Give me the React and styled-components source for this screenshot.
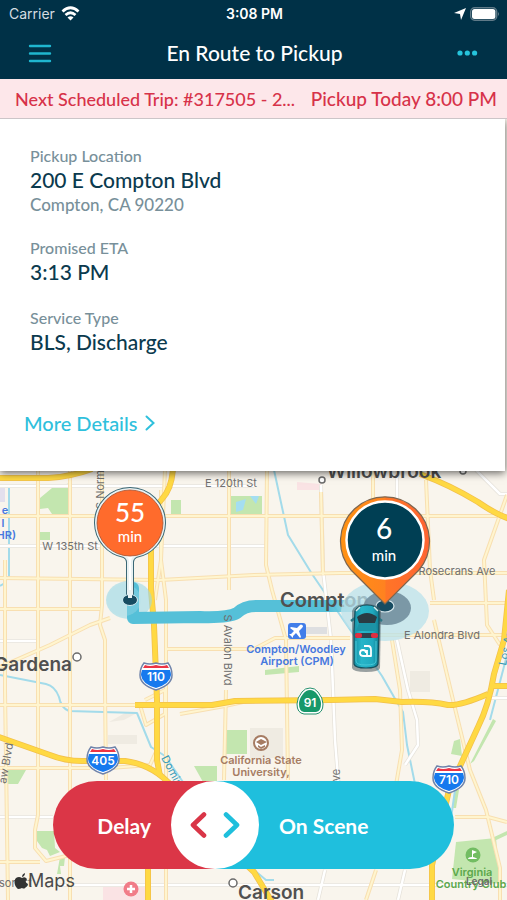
import React from 'react';
import styled, { createGlobalStyle } from 'styled-components';

const GlobalStyle = createGlobalStyle`
	*, *::before, *::after {
		box-sizing: border-box;
	}
	body {
		margin: 0;
		font-family: Lato, "Open Sans", sans-serif;
		background: #f9f5ed;
	}
	h1, p, dl, dt, dd {
		margin: 0;
	}
	button {
		border: none;
		padding: 0;
		background: none;
		font-family: inherit;
		cursor: pointer;
	}
`

const INTERSTATES = [
	{ x: 156, y: 676, label: '110' },
	{ x: 103, y: 760, label: '405' },
	{ x: 449, y: 779, label: '710' },
];

const MINOR_ROADS = [
	'M5 560V690L8 900', 'M38 470V815L35 830V848L46 861L70 855', 'M70 470V900',
	'M102 470V605L100 625L105 640V690L106 780',
	'M165 470L161 560L166 600V900', 'M161 490V560L155 600', 'M229 470V590M226 690L224 780',
	'M267 470L266 565L272 590L286 640L288 780', 'M321 492L323 575',
	'M373 470V500', 'M426 480L430 570L434 600M392 640L400 690L402 750L396 785',
	'M507 495L484 560L487 625L500 645', 'M434 620L453 700L470 770L486 810L500 868V900',
	'M0 516H507', 'M0 578L160 580L254 575L340 573H507', 'M0 609L100 609',
	'M0 705H135', 'M0 667L50 645L90 625L110 618', 'M165 649H254L275 638H350M378 635H507',
	'M0 862H40', 'M140 705L146 725L165 714V690L145 700', 'M455 817H488L507 822', 'M430 603H507',
	'M0 768H90M110 768L150 765L156 752', 'M376 870L366 900', 'M180 714L225 706L243 702',
];
const WHITE_ROADS = [
	'M0 546H254', 'M0 641H38', 'M0 817H53', 'M60 885H507', 'M321 485L323 570L331 640L335 740L339 790',
	'M0 486H254', 'M485 698H507', 'M397 640L408 690L417 720L418 745L405 765', 'M397 470V500',
	'M325 870L318 900', 'M405 870L398 900', 'M476 470L500 494H507', 'M254 546H266',
];
const HIGHWAYS = [
	'M-4 478H48Q70 477 92 469',
	'M173 468Q172 488 162 499Q151 510 151 530V590L154 625L157 700V760L160 776',
	'M135 705H212L235 701L330 700L375 699L402 702Q430 701 448 705Q460 706 488 694',
	'M-4 736L50 755Q65 761 82 761H125Q150 764 168 782L220 840L254 872L272 902',
	'M420 474Q450 485 478 502Q495 514 510 519',
	'M509 590L504 640L494 674Q489 705 478 727L449 790L432 865V902',
	'M148 866V902', 'M491 686H510',
];
const WATER = [
	'M9 484V577M5 583L0 586', 'M274 470L288 535L312 574L340 615L382 676L394 697L403 712L407 745L415 784',
	'M0 675L46 684Q55 686 59 697Q61 708 69 711L137 713L144 730L151 747L165 756L185 785',
	'M455 790L448 840', 'M254 870L266 880H274', 'M507 655L490 720',
];

const STOP_PIN = 'M96 523A34 34 0 0 1 164 523A34 34 0 0 1 136 556Q132 558 132 562V598H128V562Q128 558 124 556A34 34 0 0 1 96 523Z';

function Label({ x, y, size = 11, color = '#707070', anchor = 'middle', bold, rotate, children }) {
	return (
		<MapText
			x={x}
			y={y}
			$size={size}
			$bold={bold}
			fill={color}
			textAnchor={anchor}
			transform={rotate ? `rotate(${rotate} ${x} ${y})` : undefined}
		>
			{children}
		</MapText>
	);
}

function Interstate({ x, y, label }) {
	const shield = 'M-12-13Q-6-11 0-13Q6-11 12-13Q16-8 16-1Q16 9 0 14Q-16 9-16-1Q-16-8-12-13Z';
	return (
		<g transform={`translate(${x} ${y})`}>
			<path d={shield} fill="#fff" stroke="#6f83aa" strokeWidth="1.5" />
			<path d="M-14-6H14Q15-3 15-1Q14 8 0 12Q-14 8-15-1Q-15-3-14-6Z" fill="#1679ee" />
			<path d="M-11-11Q-6-9 0-11Q6-9 11-11L13-8H-13Z" fill="#ec3445" />
			<Label x={0} y={5} size={12} color="#fff" bold>{label}</Label>
		</g>
	);
}

function RouteMap() {
	return (
		<MapSvg viewBox="0 471 507 429" preserveAspectRatio="xMidYMin slice" role="img" aria-label="Route map">
			<defs>
				<linearGradient id="pinFill">
					<stop offset="0" stopColor="#ff9212" />
					<stop offset="0.5" stopColor="#ff8220" />
					<stop offset="0.51" stopColor="#ff7527" />
					<stop offset="1" stopColor="#ff6432" />
				</linearGradient>
				<linearGradient id="carFill">
					<stop offset="0" stopColor="#1691a6" />
					<stop offset="0.3" stopColor="#27b5c9" />
					<stop offset="0.75" stopColor="#20a9bf" />
					<stop offset="1" stopColor="#117b8f" />
				</linearGradient>
				<linearGradient id="routeFill" gradientUnits="userSpaceOnUse" x1="330" y1="0" x2="368" y2="0">
					<stop offset="0" stopColor="#55c0d8" />
					<stop offset="1" stopColor="#55c0d8" stopOpacity="0.3" />
				</linearGradient>
			</defs>
			<rect y="471" width="507" height="429" fill="#f9f5ed" />

			<g fill="#c3e6af">
				<path d="M40 498L52 488L70 483V514H52L48 508L40 509Z" />
				<path d="M40 532H50V540H40ZM171 500H181V514H171ZM230 496H262V514H230Z" />
				<path d="M226 730H247V754H226ZM194 766H217V782H203ZM4 770H26L18 784H4Z" />
				<path d="M37 831H54L55 848L60 852L50 856L47 850L42 848L37 841ZM60 857H65L64 866H60L61 874H57Z" />
				<path d="M456 842L496 838L500 884L452 879Z" />
				<path d="M493 719L496 721L474 761L470 764ZM454 741L460 739L462 756L451 754ZM265 670L299 666V672L265 675Z" />
				<path d="M492 838L507 831V835L492 842ZM455 790H459L456 808H453Z" />
			</g>
			<path d="M236 502L246 499L243 510L236 512ZM250 496H259L256 504Z" fill="#a4def1" />
			<g fill="#efebe2">
				<path d="M108 735H137V744H108ZM109 722L125 713H137L124 720ZM410 671H430V692H410ZM250 728H283V758H250Z" />
				<path d="M304 627H327V634H304Z" fill="#dedfe1" />
				<path d="M0 484H5V502H0Z" fill="#e3e0ed" />
				<path d="M297 482L321 484V490H297ZM103 885H145V900H103Z" fill="#fae3e4" />
			</g>

			<g fill="none" strokeLinejoin="round">
				{WATER.map((d) => <path key={d} d={d} stroke="#a3dbea" strokeWidth="2" />)}
				{WHITE_ROADS.map((d) => <path key={d} d={d} stroke="#e6e2da" strokeWidth="4" />)}
				{WHITE_ROADS.map((d) => <path key={d} d={d} stroke="#fff" strokeWidth="2.5" />)}
				{MINOR_ROADS.map((d) => <path key={d} d={d} stroke="#f8dfb1" strokeWidth="4" />)}
				{MINOR_ROADS.map((d) => <path key={d} d={d} stroke="#fff5cf" strokeWidth="2" />)}
				{HIGHWAYS.map((d) => <path key={d} d={d} stroke="#f2c04c" strokeWidth="6" />)}
				{HIGHWAYS.map((d) => <path key={d} d={d} stroke="#ffd943" strokeWidth="4.5" />)}
			</g>

			<g fill="#fff" stroke="#6b6b6b" strokeWidth="1.5">
				<circle cx="322" cy="480" r="3" />
				<circle cx="463" cy="471" r="3" />
				<circle cx="77" cy="657" r="4" />
				<circle cx="233" cy="883" r="4" />
			</g>

			<ellipse cx="129" cy="600" rx="23" ry="19" fill="#9bd9e6" fillOpacity="0.6" />
			<path
				d="M133 588V618L200 617Q228 618 237 613Q244 606 256 606H368"
				fill="none"
				stroke="url(#routeFill)"
				strokeWidth="12"
				strokeLinecap="round"
				strokeLinejoin="round"
			/>
			<ellipse cx="124" cy="600" rx="17" ry="16" fill="#b5e1ea" fillOpacity="0.3" />

			<Label x={384} y={478} size={19} color="#505050" bold>Willowbrook</Label>
			<Label x={280} y={607} size={20} color="#505050" anchor="start" bold>Compton</Label>
			<ellipse cx="385" cy="611" rx="44" ry="30" fill="#b9e2eb" fillOpacity="0.75" />
			<ellipse cx="387" cy="608" rx="24" ry="17" fill="#728f9e" fillOpacity="0.9" />
			<Label x={72} y={671} size={19} color="#505050" anchor="end" bold>Gardena</Label>
			<Label x={238} y={899} size={19} color="#505050" anchor="start" bold>Carson</Label>
			<Label x={231} y={487}>E 120th St</Label>
			<Label x={70} y={550}>W 135th St</Label>
			<Label x={457} y={575}>Rosecrans Ave</Label>
			<Label x={442} y={639}>E Alondra Blvd</Label>
			<Label x={104} y={509} anchor="start" rotate={-90}>S Normandie</Label>
			<Label x={224} y={650} rotate={90}>S Avalon Blvd</Label>
			<Label x={6} y={784} anchor="start" rotate={-80}>aw Blvd</Label>
			<Label x={340} y={788} anchor="start" rotate={-90}>Ave</Label>
			<Label x={161} y={758} color="#3699b5" anchor="start" rotate={62}>Dominguez</Label>
			<Label x={506} y={666} color="#3699b5" anchor="start" rotate={-78}>Los Ange</Label>
			<Label x={5} y={514} color="#4678df" bold>e</Label>
			<Label x={3} y={527} color="#4678df" bold>l</Label>
			<Label x={16} y={539} color="#4678df" anchor="end" bold>(HR)</Label>
			<Label x={296} y={653} color="#4678df" bold>Compton/Woodley</Label>
			<Label x={297} y={665} color="#4678df" bold>Airport (CPM)</Label>
			<Label x={261} y={764} color="#a67c63" bold>California State</Label>
			<Label x={261} y={776} color="#a67c63" bold>University,</Label>
			<Label x={472} y={876} color="#5ca84c" bold>Virginia</Label>
			<Label x={471} y={888} color="#5ca84c" bold>Country Club</Label>
			<Label x={-1} y={887} anchor="start">son St</Label>

			{/* airport */}
			<rect x="288" y="623" width="18" height="16" rx="3" fill="#427ee9" />
			<path
				d="M302 625Q304 626 302 628L299 631L301 637L300 638L296 633L293 636V638L291 636L289 634H291L294 631L290 628L291 627L297 628L300 625Q301 624 302 625Z"
				fill="#fff"
			/>
			{/* university */}
			<circle cx="261" cy="743" r="7" fill="#fff" stroke="#a67c63" strokeWidth="2" />
			<path d="M256 742L261 739L267 742L261 745ZM258 745L261 747L265 745V747L261 749L258 747Z" fill="#a67c63" />
			{/* golf */}
			<circle cx="473" cy="855" r="7.5" fill="#72bd62" />
			<path d="M472 850L477 852L473 854V857Q477 858 477 859H468Q468 857 472 857Z" fill="#fff" />
			{/* hospital */}
			<circle cx="131" cy="889" r="7.5" fill="#f17c88" />
			<path d="M131 885V893M127 889H135" stroke="#fff" strokeWidth="2.5" />

			{INTERSTATES.map((item) => <Interstate key={item.label} {...item} />)}
			<path d="M310 688Q315 688 318 692Q323 698 323 704Q323 713 316 714H304Q297 713 297 704Q297 698 302 692Q305 688 310 688Z" fill="#fff" stroke="#238f6c" strokeWidth="1" />
			<path d="M310 690Q314 690 317 694Q321 699 321 704Q321 711 316 712H304Q299 711 299 704Q299 699 303 694Q306 690 310 690Z" fill="#17986a" />
			<Label x={310} y={707} size={12} color="#fff" bold>91</Label>

			{/* 55 min stop */}
			<path d={STOP_PIN} fill="#3a6876" stroke="#3a6876" strokeWidth="4" />
			<path d={STOP_PIN} fill="#fff" stroke="#e9f2f3" strokeWidth="2" />
			<ellipse cx="130" cy="600" rx="7.5" ry="5.5" fill="#174c61" stroke="#d5eff5" strokeWidth="1" />
			<path d="M130 590V598" stroke="#e9f2f3" strokeWidth="4" />
			<circle cx="130" cy="523" r="33" fill="#ff6b2c" stroke="#a6512f" strokeWidth="0.8" />
			<PinText x="130" y="522" $size={26}>55</PinText>
			<PinText x="130" y="542" $size={15}>min</PinText>

			{/* 6 min stop */}
			<ellipse cx="385" cy="606" rx="9" ry="6" fill="#174c61" stroke="#d5e5ea" strokeWidth="1.2" />
			<path d="M385 604L351 570A44.5 44.5 0 1 1 419 570Z" fill="url(#pinFill)" stroke="#7d6650" strokeWidth="1.2" />
			<circle cx="385" cy="540" r="38.5" fill="#003f54" stroke="#fff" strokeWidth="2.5" />
			<PinText x="384" y="539" $size={28}>6</PinText>
			<PinText x="384" y="561" $size={15}>min</PinText>

			{/* ambulance */}
			<g>
				<path d="M352 611Q354 604 366 604Q379 604 381 611L380 668Q379 672 366 672Q353 672 352 668Z" fill="#4b5a61" fillOpacity="0.55" />
				<path d="M351 621L355 618M378 618L382 621" stroke="#2a7482" strokeWidth="2.5" />
				<path d="M355 611Q358 605 367 605Q376 605 379 611L379 631L378 664Q377 668 366 668Q355 668 354 664L354 631Z" fill="url(#carFill)" stroke="#14505e" strokeWidth="1.2" />
				<path d="M356 611L360 607M378 611L374 607" stroke="#d9e9e8" strokeWidth="1.5" />
				<path d="M357 617Q367 609 377 617L375 623H359Z" fill="#293b43" />
				<path d="M359 623H375L377 631H356Z" fill="#1c93a6" />
				<rect x="355" y="633" width="23" height="5" rx="2" fill="#303f4c" />
				<rect x="355" y="633" width="7" height="5" rx="2" fill="#dd2f42" />
				<rect x="371" y="633" width="7" height="5" rx="2" fill="#dd2f42" />
				<path d="M356 641V661Q356 665 366 665Q376 665 376 661V641" fill="none" stroke="#47c8d7" strokeWidth="1" />
				<path
					d="M364 646H368Q371 646 371 650V656H364Q360 656 360 653Q360 650 363 650Q366 650 366 653M367 650V656"
					fill="none"
					stroke="#fff"
					strokeWidth="1.8"
					strokeLinejoin="round"
				/>
			</g>

			{/* attribution */}
			<path d="M25 873Q22 874 22 877Q25 876 25 873ZM22 878Q19 876 16 878C13 881 15 887 18 889Q20 889 22 888Q24 889 25 888Q28 886 28 884Q24 882 27 879Q25 876 22 878Z" fill="#333" />
			<Label x={28} y={887} size={18} color="#4a4a4a" anchor="start">Maps</Label>
			<Label x={479} y={885} size={10} color="#6a6a6a" bold>Legal</Label>
		</MapSvg>
	);
}

function Detail({ label, value, note }) {
	return (
		<div>
			<DetailLabel>{label}</DetailLabel>
			<DetailValue>{value}</DetailValue>
			{note && <DetailNote>{note}</DetailNote>}
		</div>
	);
}

function App() {
	return (
		<Screen>
			<GlobalStyle />
			<StatusBar>
				<StatusLeft>
					Carrier
					<svg width="19" height="15" viewBox="0 0 19 15" aria-hidden="true">
						<g fill="none" stroke="#fff" strokeWidth="2.8">
							<path d="M1.5 5.5Q9.5-2 17.5 5.5" />
							<path d="M4.5 9Q9.5 4.5 14.5 9" />
						</g>
						<path d="M6.5 11.5Q9.5 9 12.5 11.5L9.5 14.5Z" fill="#fff" />
					</svg>
				</StatusLeft>
				<StatusTime>3:08 PM</StatusTime>
				<StatusRight>
					<svg width="12" height="12" viewBox="0 0 12 12" aria-hidden="true">
						<path d="M12 0L7 12L6 6L0 5Z" fill="#fff" />
					</svg>
					<svg width="30" height="14" viewBox="0 0 30 14" aria-hidden="true">
						<rect x="0.7" y="0.7" width="26" height="12.6" rx="4" fill="none" stroke="#5f7a88" strokeWidth="1.4" />
						<rect x="2" y="2" width="23.4" height="10" rx="2.5" fill="#fff" />
						<path d="M28 5Q30 7 28 9Z" fill="#5f7a88" />
					</svg>
				</StatusRight>
			</StatusBar>
			<NavBar>
				<IconButton type="button" aria-label="Menu">
					<svg width="24" height="19" viewBox="0 0 24 19">
						<path d="M2 2H22M2 9.5H22M2 17H22" stroke="#1fb6cf" strokeWidth="2.4" strokeLinecap="round" />
					</svg>
				</IconButton>
				<Title>En Route to Pickup</Title>
				<IconButton type="button" aria-label="More options">
					<svg width="22" height="6" viewBox="0 0 22 6">
						<g fill="#25c4dc">
							<circle cx="3" cy="3" r="2.6" />
							<circle cx="10.3" cy="3" r="2.6" />
							<circle cx="17.6" cy="3" r="2.6" />
						</g>
					</svg>
				</IconButton>
			</NavBar>
			<NextTrip>
				<TripName>Next Scheduled Trip: #317505 - 2...</TripName>
				<TripTime>Pickup Today 8:00 PM</TripTime>
			</NextTrip>
			<Card>
				<DetailList>
					<Detail label="Pickup Location" value="200 E Compton Blvd" note="Compton, CA 90220" />
					<Detail label="Promised ETA" value="3:13 PM" />
					<Detail label="Service Type" value="BLS, Discharge" />
				</DetailList>
				<MoreLink href="#details">
					More Details
					<svg width="10" height="16" viewBox="0 0 10 16" aria-hidden="true">
						<path d="M1.5 1.5L8.5 8L1.5 14.5" fill="none" stroke="currentColor" strokeWidth="2" strokeLinecap="round" />
					</svg>
				</MoreLink>
			</Card>
			<MapArea>
				<RouteMap />
				<Slider>
					<DelayButton type="button">Delay</DelayButton>
					<KnobTrack>
						<Knob type="button" aria-label="Slide to choose">
							<svg width="50" height="26" viewBox="0 0 50 26">
								<g fill="none" strokeWidth="4.6" strokeLinecap="round" strokeLinejoin="round">
									<path d="M14 2.5L3 13L14 23.5" stroke="#d93547" />
									<path d="M36 2.5L47 13L36 23.5" stroke="#1fbfdc" />
								</g>
							</svg>
						</Knob>
					</KnobTrack>
					<SceneButton type="button">On Scene</SceneButton>
				</Slider>
			</MapArea>
		</Screen>
	);
}

const Screen = styled.div`
	display: flex;
	flex-direction: column;
	min-height: 100vh;
`
const StatusBar = styled.div`
	display: grid;
	grid-template-columns: 1fr auto 1fr;
	align-items: center;
	height: 27px;
	padding: 0 7px 0 9px;

	background: #003147;
	color: #fff;
	font-family: Inter, Roboto, sans-serif;
	font-size: 14px;
`
const StatusLeft = styled.div`
	display: flex;
	align-items: center;
	gap: 6px;
	color: #d5dde1;
`
const StatusTime = styled.div`
	font-weight: 600;
`
const StatusRight = styled.div`
	display: flex;
	align-items: center;
	justify-content: flex-end;
	gap: 4px;
`
const NavBar = styled.header`
	display: flex;
	align-items: center;
	justify-content: space-between;
	height: 52px;
	padding: 0 28px;

	background: #003147;
`
const IconButton = styled.button`
	display: flex;
	align-items: center;
	height: 40px;
`
const Title = styled.h1`
	color: #fff;
	font-size: 21px;
	font-weight: 500;
	line-height: 26px;
`
const NextTrip = styled.div`
	display: flex;
	align-items: center;
	justify-content: space-between;
	height: 40px;
	padding: 0 10px 0 15px;

	background: #fde7ea;
	border-bottom: 1px solid #ccc5c8;
	color: #d73249;
	font-weight: 500;
	white-space: nowrap;
`
const TripName = styled.span`
	font-size: 18px;
`
const TripTime = styled.span`
	font-size: 19px;
`
const Card = styled.main`
	position: relative;
	z-index: 1;
	display: flex;
	flex-direction: column;
	align-items: flex-start;
	min-height: 352px;
	margin-right: 2px;
	padding: 27px 24px 28px;

	background: #fff;
	box-shadow: 0 2px 8px rgba(0, 0, 0, .6);
	clip-path: inset(0 -2px -16px 0);
`
const DetailList = styled.dl`
	display: flex;
	flex-direction: column;
	gap: 22px;
	padding-left: 6px;
	font-weight: 500;
`
const DetailLabel = styled.dt`
	color: #78909a;
	font-size: 16px;
	line-height: 20px;
`
const DetailValue = styled.dd`
	color: #0b3a4e;
	font-size: 21px;
	line-height: 28px;
`
const DetailNote = styled.dd`
	color: #78909a;
	font-size: 17px;
	line-height: 22px;
`
const MoreLink = styled.a`
	display: flex;
	align-items: center;
	gap: 8px;
	margin-top: auto;

	color: #2fc0dc;
	font-size: 20px;
	font-weight: 500;
	line-height: 40px;
	text-decoration: none;
`
const MapArea = styled.section`
	position: relative;
	display: flex;
	flex: 1;
	flex-direction: column;
	justify-content: flex-end;
	min-height: 429px;
	padding: 0 53px 31px;
	overflow: hidden;
`
const MapSvg = styled.svg`
	position: absolute;
	top: 0;
	left: 0;
	width: 100%;
	height: 100%;
`
const MapText = styled.text`
	font-family: Inter, Roboto, sans-serif;
	font-size: ${({ $size }) => $size}px;
	font-weight: ${({ $bold }) => ($bold ? 600 : 400)};
`
const PinText = styled.text`
	fill: #fff;
	font-family: Lato, sans-serif;
	font-size: ${({ $size }) => $size}px;
	font-weight: 500;
	text-anchor: middle;
`
const Slider = styled.div`
	position: relative;
	display: flex;
	height: 88px;
	border-radius: 44px;
	overflow: hidden;
`
const ActionButton = styled.button`
	color: #fff;
	font-size: 21px;
	font-weight: 700;
`
const DelayButton = styled(ActionButton)`
	flex: 98;
	padding-right: 20px;
	background: #db3647;
	text-align: right;
`
const SceneButton = styled(ActionButton)`
	flex: 175;
	padding-left: 20px;
	background: #1fbfdd;
	text-align: left;
`
const KnobTrack = styled.div`
	flex: none;
	background: linear-gradient(90deg, #db3647 50%, #1fbfdd 50%);
`
const Knob = styled.button`
	display: flex;
	align-items: center;
	justify-content: center;
	width: 88px;
	height: 88px;
	border-radius: 50%;
	background: #fff;
`

export default App;
